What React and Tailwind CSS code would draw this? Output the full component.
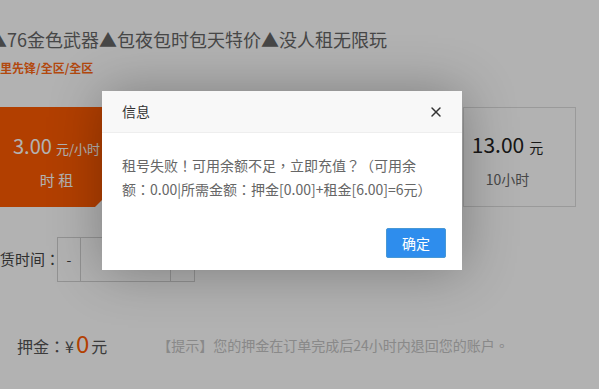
import { X } from "lucide-react";

const plans = [
  { price: "3.00", unit: "元/小时", label: "时 租", active: true },
  { price: "6.00", unit: "元", label: "2小时" },
  { price: "10.00", unit: "元", label: "5小时" },
  { price: "13.00", unit: "元", label: "10小时" },
];

export default function App() {
  return (
    <div className="relative w-[599px] h-[389px] overflow-hidden bg-white font-['Noto_Sans_CJK_TC','Noto_Sans_CJK_SC',sans-serif]">
      {/* page under the dialog */}
      <div className="flex flex-col">
        <h1 className="mt-[26px] ml-[-11px] whitespace-nowrap text-[18px] leading-[26px] text-[#666]">
          ▲76金色武器▲包夜包时包天特价▲没人租无限玩
        </h1>
        <p className="mt-[7px] text-[12px] leading-[18px] font-bold text-[#ff6915]">里先锋/全区/全区</p>

        <div className="mt-[30px] ml-[-11px] flex gap-[45px]">
          {plans.map((p) =>
            p.active ? (
              <div key={p.price} className="relative flex h-[100px] w-[113px] shrink-0 flex-col items-center bg-[#ff5b00] pl-[22px] text-white">
                <div className="mt-[25px] flex items-baseline gap-[4px] leading-[28px]">
                  <span className="text-[20px]">{p.price}</span>
                  <span className="text-[13px]">{p.unit}</span>
                </div>
                <div className="mt-[3px] text-[15px] leading-[28px]">{p.label}</div>
                <span className="absolute right-0 bottom-0 h-0 w-0 border-l-[7px] border-b-[7px] border-l-transparent border-b-white" />
              </div>
            ) : (
              <div key={p.price} className="flex h-[100px] w-[113px] shrink-0 flex-col items-center border border-[#ddd] pr-[24px]">
                <div className="mt-[22px] flex items-baseline gap-[5px] leading-[28px]">
                  <span className="text-[21px] text-[#222]">{p.price}</span>
                  <span className="text-[14px] text-[#222]">{p.unit}</span>
                </div>
                <div className="mt-[4px] text-[14px] leading-[28px] text-[#666]">{p.label}</div>
              </div>
            )
          )}
        </div>

        <div className="mt-[30px] ml-[-15px] flex items-center">
          <span className="w-[75px] whitespace-nowrap text-[15px] text-[#444]">租赁时间：</span>
          <div className="ml-[-3px] flex h-[45px] border border-[#d2d2d2]">
            <div className="flex w-[23px] items-center justify-center border-r border-[#d2d2d2] text-[14px] text-[#444]">-</div>
            <div className="flex w-[89px] items-center justify-center text-[14px] text-[#333]">1</div>
            <div className="flex w-[24px] items-center justify-center border-l border-[#d2d2d2] text-[14px] text-[#444]">+</div>
          </div>
        </div>

        <div className="mt-[46px] flex items-center leading-[30px]">
          <div className="ml-[17px] flex items-baseline whitespace-nowrap text-[16px] text-[#555]">
            押金：¥<span className="mx-[2px] text-[24px] text-[#ff5b00]">0</span>元
          </div>
          <p className="ml-[50px] whitespace-nowrap text-[14px] text-[#c4c4c4]">【提示】您的押金在订单完成后24小时内退回您的账户。</p>
        </div>
      </div>

      {/* shade */}
      <div className="absolute inset-0 bg-black/30" />

      {/* dialog */}
      <div className="absolute left-[102px] top-[91px] w-[360px] bg-white shadow-[1px_1px_50px_rgba(0,0,0,0.3)]">
        <div className="flex h-[42px] items-center justify-between border-b border-[#eee] bg-[#f8f8f8] pl-5 pr-[18px]">
          <span className="text-[14px] text-[#333]">信息</span>
          <X size={16} strokeWidth={2.2} className="text-[#333]" />
        </div>
        <div className="p-5 text-[14px] leading-6 text-[#666]">
          租号失败！可用余额不足，立即充值？（可用余<br />额：0.00|所需金额：押金[0.00]+租金[6.00]=6元）
        </div>
        <div className="flex justify-end pt-[7px] pr-4 pb-3">
          <button className="h-[30px] rounded-[2px] border border-[#4898d5] bg-[#2e8ded] px-[15px] text-[14px] text-white">确定</button>
        </div>
      </div>
    </div>
  );
}
